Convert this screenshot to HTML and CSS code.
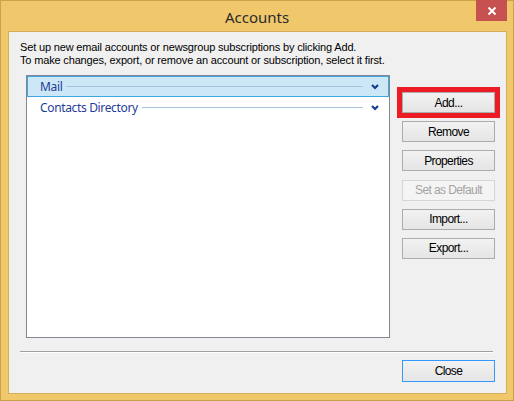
FILE: index.html
```html
<!DOCTYPE html>
<html lang="en">
<head>
  <meta charset="UTF-8" />
  <title>Accounts</title>
  <link rel="stylesheet" href="styles.css">
</head>
<body>
  <div class="window">
    <div class="titlebar">
      <span class="title">Accounts</span>
      <button class="close-x" aria-label="Close">
        <svg width="10" height="10" viewBox="0 0 10 10"><path d="M1.5 1.5 L8.5 8.5 M8.5 1.5 L1.5 8.5" stroke="#fff" stroke-width="2" /></svg>
      </button>
    </div>

    <div class="client">
      <p class="intro">Set up new email accounts or newsgroup subscriptions by clicking Add.<br>To make changes, export, or remove an account or subscription, select it first.</p>

      <div class="main">
        <div class="list">
          <div class="group selected">
            <span class="group-name">Mail</span>
            <span class="rule"></span>
            <svg class="chev" width="8" height="6" viewBox="0 0 8 6"><path d="M1 1 L4 4 L7 1" fill="none" stroke="#1c3b8f" stroke-width="2.2" /></svg>
          </div>
          <div class="group">
            <span class="group-name">Contacts Directory</span>
            <span class="rule"></span>
            <svg class="chev" width="8" height="6" viewBox="0 0 8 6"><path d="M1 1 L4 4 L7 1" fill="none" stroke="#1c3b8f" stroke-width="2.2" /></svg>
          </div>
        </div>

        <div class="actions">
          <button class="btn highlight">Add...</button>
          <button class="btn">Remove</button>
          <button class="btn">Properties</button>
          <button class="btn" disabled>Set as Default</button>
          <button class="btn">Import...</button>
          <button class="btn">Export...</button>
        </div>
      </div>

      <div class="separator"></div>

      <div class="footer">
        <button class="btn default">Close</button>
      </div>
    </div>
  </div>
</body>
</html>
```

FILE: styles.css
```css
body {
  margin: 0;
  background: #f0c86b;
}
.window {
  position: relative;
  width: 514px;
  height: 401px;
  box-sizing: border-box;
  border: 1px solid #c9a24c;
  background: #f0c86b;
  display: flex;
  flex-direction: column;
}
.titlebar {
  position: relative;
  height: 30px;
  display: flex;
  justify-content: center;
  align-items: center;
}
.title {
  font-family: "Noto Sans", sans-serif;
  font-size: 15px;
  color: #2b2b2b;
  padding-top: 1px;
}
.close-x {
  position: absolute;
  top: -1px;
  right: 6px;
  width: 31px;
  height: 21px;
  border: none;
  padding: 0;
  background: #c75050;
  display: flex;
  align-items: center;
  justify-content: center;
}
.client {
  margin: 0 6px 0 7px;
  height: 363px;
  box-sizing: border-box;
  border: 1px solid #d4ae5c;
  background: #f0f0f0;
  padding: 9px 11px 0 11px;
  display: flex;
  flex-direction: column;
}
.intro {
  margin: 0;
  font-family: "Liberation Sans", Arial, sans-serif;
  font-size: 11px;
  line-height: 13px;
  letter-spacing: -0.16px;
  color: #000;
}
.main {
  display: flex;
  margin-top: 8px;
  padding-left: 6px;
}
.list {
  width: 364px;
  height: 263px;
  box-sizing: border-box;
  border: 1px solid #828790;
  background: #fff;
}
.group {
  height: 21px;
  box-sizing: border-box;
  display: flex;
  align-items: center;
  padding: 0 9px 0 12px;
  border: 1px solid transparent;
  font-family: "Noto Sans", sans-serif;
  font-size: 12px;
  letter-spacing: -0.35px;
  color: #1f3c99;
}
.group.selected {
  background: #cce8f7;
  border-color: #3fa6df;
}
.rule {
  flex: 1;
  height: 1px;
  margin: 0 8px 0 4px;
  background: #a9c3df;
}
.chev {
  display: block;
}
.actions {
  display: flex;
  flex-direction: column;
  gap: 8.2px;
  margin: 17px 0 0 12px;
}
.btn {
  width: 93px;
  height: 21px;
  box-sizing: border-box;
  padding: 0;
  border: 1px solid #acacac;
  background: linear-gradient(#f2f2f2, #e5e5e5);
  font-family: "Liberation Sans", Arial, sans-serif;
  font-size: 12px;
  letter-spacing: -0.6px;
  color: #000;
}
.btn.highlight {
  outline: 5px solid #ed1c24;
}
.btn:disabled {
  color: #a3a3a3;
  border-color: #d5d5d5;
  background: #f4f4f4;
}
.btn.default {
  height: 22px;
  border-color: #3399ff;
}
.separator {
  margin: 13px 2px 0 0;
  height: 1px;
  background: #a0a0a0;
  border-bottom: 1px solid #fff;
}
.footer {
  display: flex;
  justify-content: flex-end;
  margin-top: 7px;
}
```
